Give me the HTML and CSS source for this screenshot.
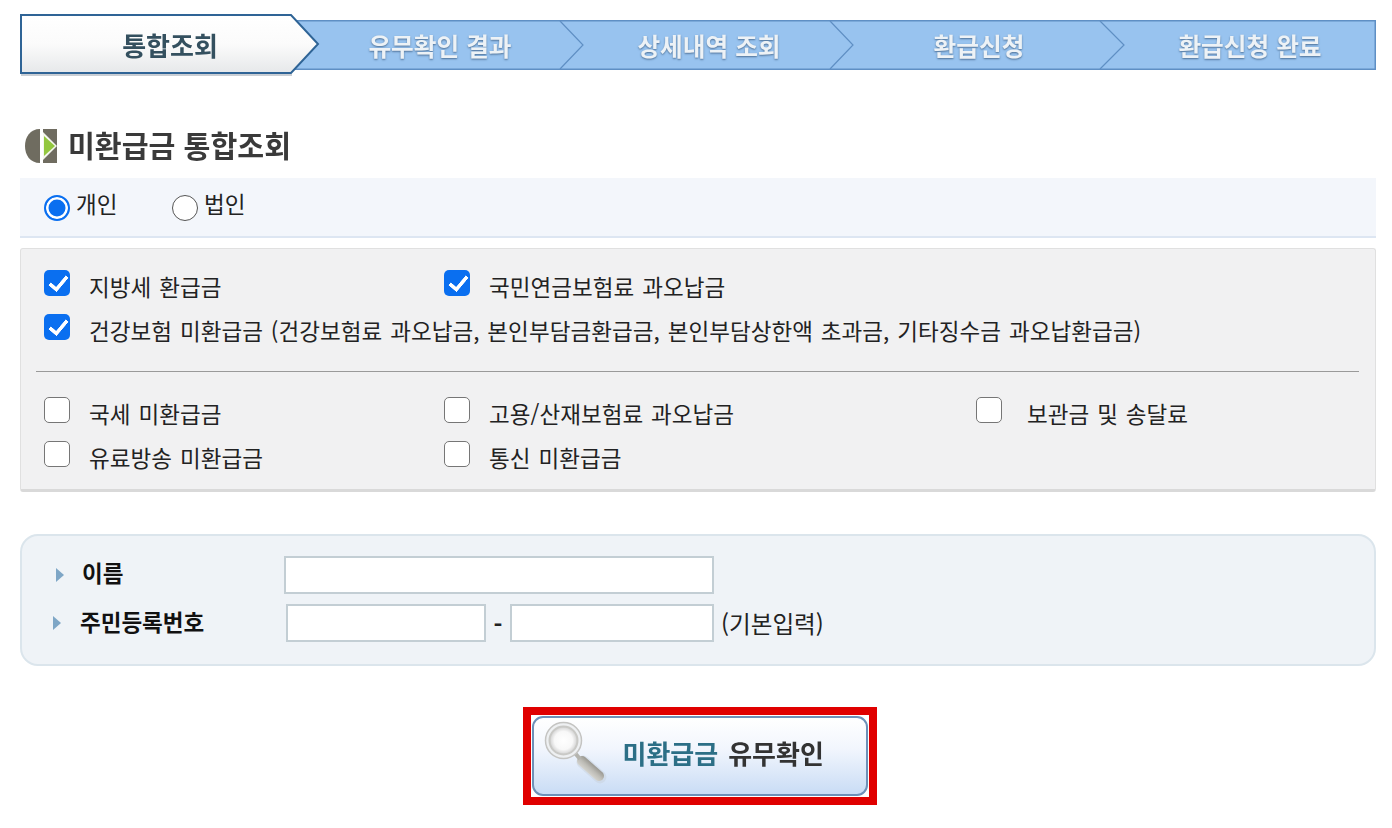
FILE: index.html
```html
<!DOCTYPE html>
<html lang="ko">
<head>
	<meta charset="utf-8">
	<title>미환급금 통합조회</title>
	<link rel="stylesheet" href="styles.css">
</head>
<body>
	<div class="page">
		<div class="steps">
			<svg class="steps-art" width="1356" height="64" viewBox="0 0 1356 64">
				<defs>
					<linearGradient id="activeFill" x1="0" y1="0" x2="0" y2="1">
						<stop offset="0" stop-color="#ffffff"/>
						<stop offset="0.5" stop-color="#fbfbfb"/>
						<stop offset="1" stop-color="#e6e8ea"/>
					</linearGradient>
				</defs>
				<rect x="0.75" y="6.75" width="1354.5" height="48.5" fill="#98c3ef" stroke="#5f8fc4" stroke-width="1.5"/>
				<path d="M540 7 L563 31 L540 55" fill="none" stroke="#5f8fc4" stroke-width="1.2"/>
				<path d="M810 7 L833 31 L810 55" fill="none" stroke="#5f8fc4" stroke-width="1.2"/>
				<path d="M1080 7 L1104 31 L1080 55" fill="none" stroke="#5f8fc4" stroke-width="1.2"/>
				<path d="M1 61 H272" fill="none" stroke="#c9ced4" stroke-width="2"/>
				<path d="M1 1 H271 L298 30 L271 59 H1 Z" fill="url(#activeFill)" stroke="#2f6496" stroke-width="2"/>
			</svg>
			<div class="step step-on">통합조회</div>
			<div class="step">유무확인 결과</div>
			<div class="step">상세내역 조회</div>
			<div class="step">환급신청</div>
			<div class="step step-last">환급신청 완료</div>
		</div>

		<h2 class="title">
			<svg class="title-icon" width="33" height="34" viewBox="0 0 33 34">
				<path d="M15 0 C5 0 0 8 0 17 C0 26 5 34 15 34 Z" fill="#6f6c60"/>
				<rect x="18" y="0" width="14" height="34" fill="#6f6c60"/>
				<path d="M18 3 L32 17 L18 31 Z" fill="#f4f6ee"/>
				<path d="M19 7 L30 17 L19 27 Z" fill="#93c73f"/>
			</svg>
			<span>미환급금 통합조회</span>
		</h2>

		<div class="kind">
			<label class="kind-item"><input type="radio" name="kind" checked>개인</label>
			<label class="kind-item"><input type="radio" name="kind">법인</label>
		</div>

		<div class="box">
			<div class="row">
				<label class="chk col-a"><input type="checkbox" checked>지방세 환급금</label>
				<label class="chk col-b"><input type="checkbox" checked>국민연금보험료 과오납금</label>
			</div>
			<div class="row">
				<label class="chk"><input type="checkbox" checked>건강보험 미환급금 (건강보험료 과오납금, 본인부담금환급금, 본인부담상한액 초과금, 기타징수금 과오납환급금)</label>
			</div>
			<hr class="line">
			<div class="row">
				<label class="chk col-a"><input type="checkbox">국세 미환급금</label>
				<label class="chk col-b"><input type="checkbox">고용/산재보험료 과오납금</label>
				<label class="chk col-c"><input type="checkbox">보관금 및 송달료</label>
			</div>
			<div class="row">
				<label class="chk col-a"><input type="checkbox">유료방송 미환급금</label>
				<label class="chk col-b"><input type="checkbox">통신 미환급금</label>
			</div>
		</div>

		<div class="form">
			<div class="form-row">
				<span class="form-label label-name">이름</span>
				<input class="field field-name" type="text">
			</div>
			<div class="form-row form-row-id">
				<span class="form-label label-id">주민등록번호</span>
				<input class="field field-id" type="text">
				<span class="dash">-</span>
				<input class="field field-id2" type="text">
				<span class="hint">(기본입력)</span>
			</div>
		</div>

		<div class="action">
			<div class="mark">
				<button class="search" type="button">
					<svg class="lens" width="78" height="74" viewBox="0 0 78 74">
						<defs>
							<radialGradient id="glass" cx="0.5" cy="0.5" r="0.5">
								<stop offset="0" stop-color="#ffffff"/>
								<stop offset="0.65" stop-color="#f8f8f8"/>
								<stop offset="1" stop-color="#d0d0d0"/>
							</radialGradient>
							<linearGradient id="grip" x1="0" y1="1" x2="1" y2="0">
								<stop offset="0" stop-color="#f0f0ec"/>
								<stop offset="0.5" stop-color="#bdbcb6"/>
								<stop offset="1" stop-color="#6c6a62"/>
							</linearGradient>
						</defs>
						<path d="M43 43 L60 58" stroke="#c9d3de" stroke-width="13" stroke-linecap="round" opacity="0.5"/>
						<path d="M42 42 L59 57" stroke="url(#grip)" stroke-width="10" stroke-linecap="round"/>
						<path d="M35 34 L40 40" stroke="#b4b4ae" stroke-width="4"/>
						<circle cx="23.5" cy="21.5" r="18" fill="#eef0f2" stroke="#c4c4c2" stroke-width="1.5"/>
						<circle cx="23.5" cy="21.5" r="14" fill="url(#glass)" stroke="#c9c9c6" stroke-width="2"/>
					</svg>
					<span class="search-a">미환급금</span>
					<span class="search-b">유무확인</span>
				</button>
			</div>
		</div>
	</div>
</body>
</html>
```
FILE: styles.css
```css
html, body {
	margin: 0;
	background: #fff;
}
body {
	font-family: "Noto Sans CJK KR", "Noto Sans", sans-serif;
	color: #222;
}
.page {
	padding: 14px 16px 0 20px;
}

/* steps */
.steps {
	position: relative;
	display: grid;
	grid-template-columns: 300px 240px 298px 242px 276px;
	height: 64px;
}
.steps-art {
	position: absolute;
	left: 0;
	top: 0;
}
.step {
	position: relative;
	text-align: center;
	line-height: 62px;
	font-size: 24.7px;
	font-weight: 700;
	color: #edf2f6;
	text-shadow: 0 1px 2px #4c6f95;
	filter: blur(0.5px);
}
.step-on {
	font-size: 26px;
	color: #34505f;
	text-shadow: none;
}
.step-last {
	padding-left: 24px;
}

/* title */
.title {
	display: flex;
	align-items: center;
	gap: 10px;
	height: 36px;
	margin: 50px 0 14px 5px;
	font-size: 29.2px;
	font-weight: 700;
	color: #3a3a3a;
}
.title-icon {
	filter: blur(0.4px);
}
.title span {
	padding-bottom: 4px;
	filter: blur(0.5px);
}

/* radios */
.kind {
	display: flex;
	height: 58px;
	padding-left: 24px;
	background: #f3f6fb;
	border-bottom: 2px solid #dde6f2;
}
.kind-item {
	display: flex;
	align-items: center;
	width: 128px;
	padding-bottom: 8px;
	font-size: 22.5px;
}
.kind input {
	appearance: none;
	flex: none;
	width: 26px;
	height: 26px;
	margin: 10px 6px 0 0;
	border: 1.5px solid #555;
	border-radius: 50%;
	background: #fff;
}
.kind input:checked {
	border: 2.5px solid #0a6ff0;
	box-shadow: inset 0 0 0 2.5px #fff;
	background: #0a6ff0;
}

/* checkbox box */
.box {
	margin-top: 10px;
	padding: 15px 16px 0 15px;
	height: 225px;
	background: #f1f1f2;
	border: 1px solid #e0e0e0;
	border-bottom: 3px solid #d9d9d9;
	border-radius: 3px;
}
.row {
	display: flex;
	height: 44px;
}
.chk {
	display: flex;
	align-items: center;
	font-size: 22.5px;
	word-spacing: 1.5px;
	letter-spacing: 0.06px;
	line-height: 44px;
	white-space: nowrap;
}
.col-a {
	width: 400px;
}
.col-b {
	width: 532px;
}
.chk input {
	appearance: none;
	position: relative;
	flex: none;
	width: 26px;
	height: 26px;
	margin: -6px 19px 0 8px;
	border: 1.5px solid #767676;
	border-radius: 5px;
	background: #fff;
}
.chk input:checked {
	border: 0;
	background: #0a6ff0;
}
.chk input:checked::after {
	content: "";
	position: absolute;
	left: 9px;
	top: 2px;
	width: 7px;
	height: 15px;
	border: solid #fff;
	border-width: 0 4.5px 4.5px 0;
	border-radius: 1px;
	transform: rotate(40deg);
}
.col-c input {
	margin-right: 25px;
}
.line {
	height: 0;
	margin: 19px 0 19px;
	border: 0;
	border-top: 1.5px solid #9a9a9a;
}

/* form */
.form {
	margin-top: 42px;
	padding-top: 20px;
	box-sizing: border-box;
	height: 132px;
	background: #eff3f7;
	border: 2px solid #dbe5ec;
	border-radius: 18px;
}
.form-row {
	display: flex;
	align-items: center;
	height: 38px;
}
.form-row-id {
	margin-top: 10px;
}
.form-label {
	position: relative;
	font-size: 22.5px;
	font-weight: 700;
	color: #111;
}
.form-label::before {
	content: "";
	position: absolute;
	top: 50%;
	margin-top: -7px;
	border-left: 8px solid #7ea6c6;
	border-top: 7px solid transparent;
	border-bottom: 7px solid transparent;
	filter: blur(0.5px);
}
.label-name {
	width: 202px;
	padding: 0 0 6px 60px;
}
.label-name::before {
	left: 34px;
}
.label-id {
	width: 206px;
	padding: 0 0 4px 58px;
}
.label-id::before {
	left: 31px;
}
.field {
	box-sizing: border-box;
	height: 38px;
	margin: 0;
	border: 2px solid #c3ced4;
	background: #fff;
	outline: 0;
}
.field-name {
	width: 430px;
}
.field-id {
	width: 200px;
}
.dash {
	width: 24px;
	text-align: center;
	font-size: 24px;
	font-weight: 700;
}
.field-id2 {
	width: 204px;
}
.hint {
	margin-left: 7px;
	font-size: 23.6px;
}

/* button */
.action {
	display: flex;
	justify-content: center;
	margin: 41px 0 0 3px;
}
.mark {
	padding: 1px;
	background: #fff;
	border: 8.5px solid #e00000;
}
.search {
	display: flex;
	align-items: center;
	width: 336px;
	height: 80px;
	padding: 0;
	background: linear-gradient(#ffffff, #f2f6fd 40%, #c9dcf5);
	border: 2px solid #6d90b8;
	border-radius: 11px;
	font-family: inherit;
	font-size: 26px;
	font-weight: 700;
}
.lens {
	flex: none;
	margin-left: 6px;
	margin-right: 5px;
}
.search-a {
	color: #2c6f86;
	margin-right: 10px;
	padding-bottom: 7px;
	filter: blur(0.5px);
}
.search-b {
	color: #333;
	padding-bottom: 7px;
	filter: blur(0.5px);
}
```
